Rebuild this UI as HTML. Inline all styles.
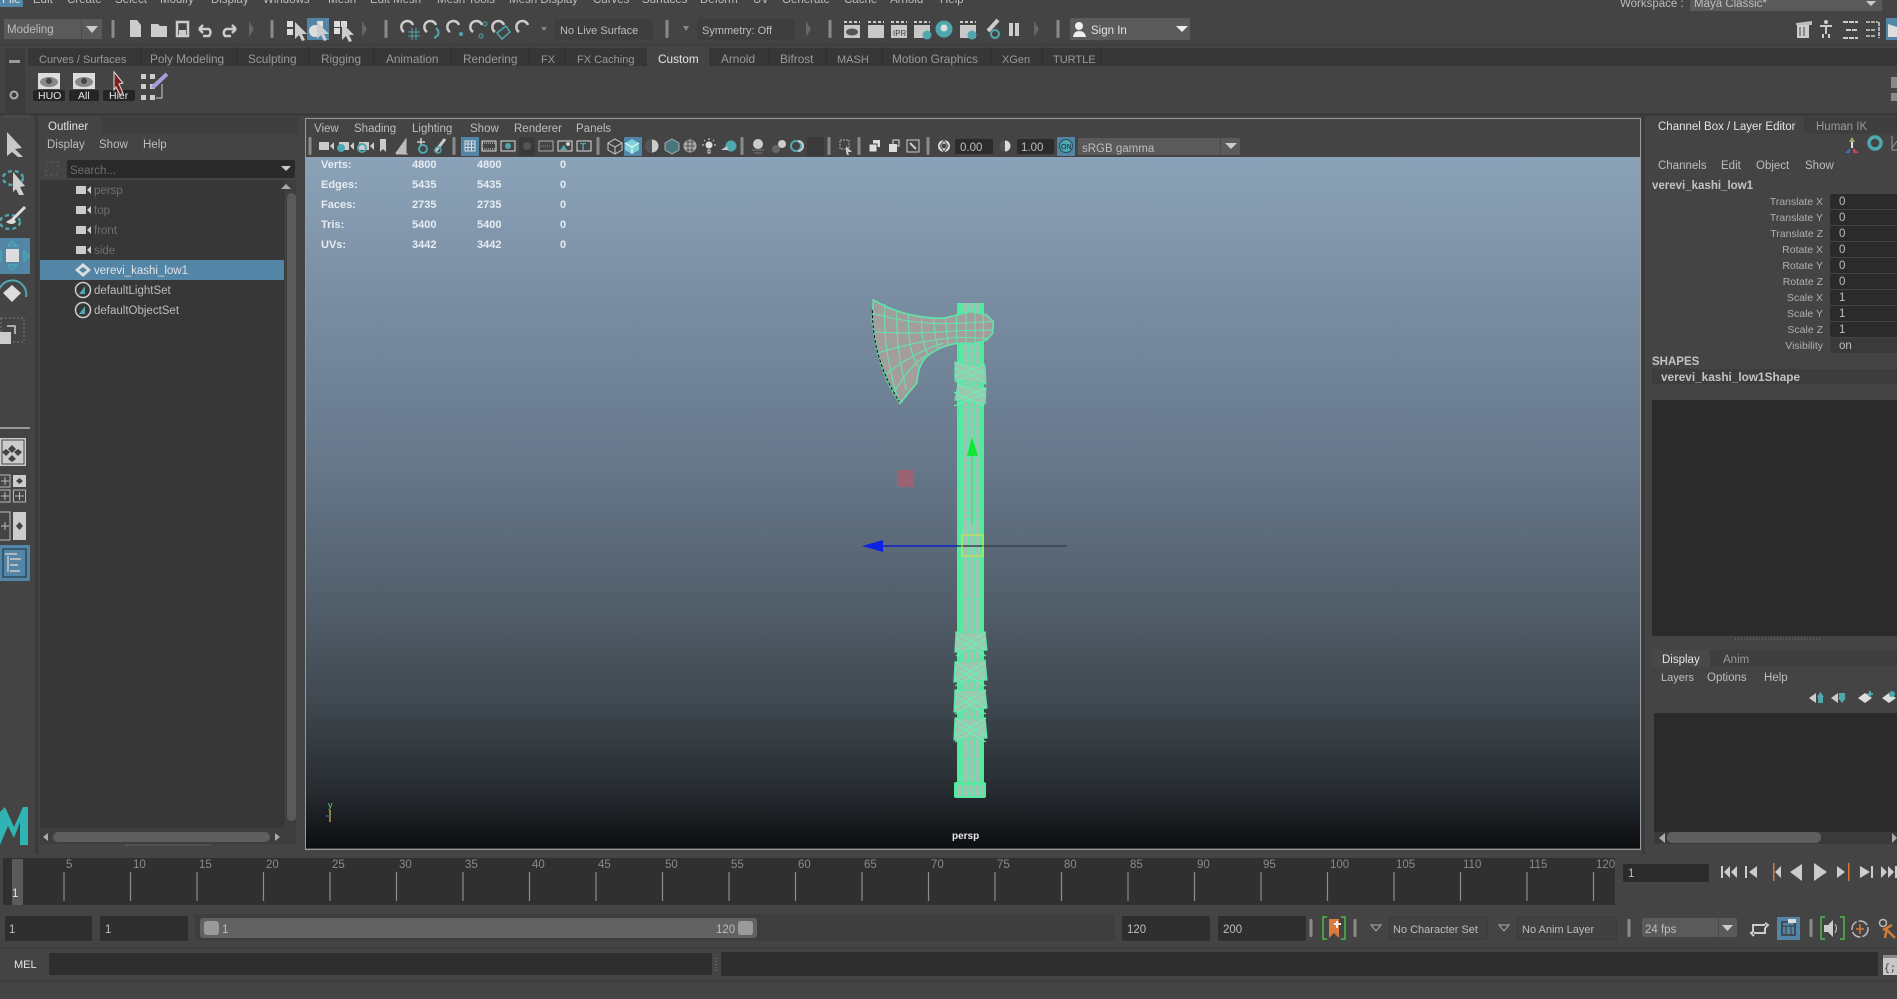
<!DOCTYPE html>
<html><head><meta charset="utf-8"><title>Maya</title>
<style>
html,body{margin:0;padding:0;width:1897px;height:999px;overflow:hidden;background:#444;font-family:"Liberation Sans",sans-serif}
.b{position:absolute}
.t{position:absolute;white-space:nowrap;font-size:11.5px;line-height:16px;height:16px;color:#bdbdbd;margin-top:1px}
.d{color:#9a9a9a}
.h{font-size:11.8px;margin-top:0}
.n{font-size:11px}
.o{color:#6f6f6f}
.w{color:#e4e4e4}
.m{margin-top:0}
.s{font-size:11px;font-weight:bold;color:#e6ecf2;line-height:14px;height:14px;margin-top:0}
.bd{font-weight:bold;font-size:11.5px;color:#c4c4c4;margin-top:0}
.r{position:absolute;left:1640px;width:183px;text-align:right;white-space:nowrap;font-size:10.5px;line-height:16px;color:#b0b0b0;margin-top:1px}
.f{position:absolute;left:1830px;width:67px;height:15px;background:#2b2b2b}
.v{position:absolute;left:1839px;font-size:11.5px;line-height:16px;color:#bdbdbd;margin-top:1px}
svg{position:absolute;left:0;top:0}
</style></head><body>

<div class="b" style="left:0;top:0;width:23px;height:7px;background:#5285a6"></div>
<div class="t w m" style="left:2px;top:-8px">File</div>
<div class="t m" style="left:33px;top:-8px">Edit</div>
<div class="t m" style="left:67px;top:-8px">Create</div>
<div class="t m" style="left:115px;top:-8px">Select</div>
<div class="t m" style="left:160px;top:-8px">Modify</div>
<div class="t m" style="left:211px;top:-8px">Display</div>
<div class="t m" style="left:263px;top:-8px">Windows</div>
<div class="t m" style="left:328px;top:-8px">Mesh</div>
<div class="t m" style="left:370px;top:-8px">Edit Mesh</div>
<div class="t m" style="left:437px;top:-8px">Mesh Tools</div>
<div class="t m" style="left:509px;top:-8px">Mesh Display</div>
<div class="t m" style="left:593px;top:-8px">Curves</div>
<div class="t m" style="left:642px;top:-8px">Surfaces</div>
<div class="t m" style="left:700px;top:-8px">Deform</div>
<div class="t m" style="left:753px;top:-8px">UV</div>
<div class="t m" style="left:782px;top:-8px">Generate</div>
<div class="t m" style="left:844px;top:-8px">Cache</div>
<div class="t m" style="left:890px;top:-8px">Arnold</div>
<div class="t m" style="left:940px;top:-8px">Help</div>
<div class="t m" style="left:1620px;top:-4px">Workspace :</div>
<div class="b" style="left:1690px;top:0;width:192px;height:11px;background:#5a5a5a"></div>
<div class="t m" style="left:1694px;top:-4px">Maya Classic*</div>

<div class="b" style="left:4px;top:19px;width:98px;height:20px;background:#5a5a5a"></div>
<div class="b" style="left:81px;top:19px;width:1px;height:20px;background:#4a4a4a"></div>
<div class="t" style="left:7px;top:21px">Modeling</div>
<div class="b" style="left:554px;top:19px;width:99px;height:21px;background:#3e3e3e;border-radius:2px"></div>
<div class="t n" style="left:560px;top:22px">No Live Surface</div>
<div class="b" style="left:697px;top:19px;width:98px;height:21px;background:#3e3e3e;border-radius:2px"></div>
<div class="t n" style="left:702px;top:22px">Symmetry: Off</div>
<div class="b" style="left:1070px;top:18px;width:120px;height:22px;background:#5b5b5b"></div>
<div class="t w" style="left:1091px;top:22px">Sign In</div>
<div class="b" style="left:307px;top:18px;width:22px;height:22px;background:#5285a6"></div>
<div class="b" style="left:1886px;top:18px;width:11px;height:22px;background:#5285a6"></div>

<div class="b" style="left:0;top:43px;width:1897px;height:3px;background:#3f3f3f"></div>
<div class="b" style="left:28px;top:48px;width:1869px;height:18px;background:#373737"></div>
<div class="b" style="left:5px;top:48px;width:20px;height:65px;background:#3c3c3c"></div>
<div class="b" style="left:646px;top:47px;width:64px;height:19px;background:#444"></div>
<div class="t d n" style="left:39px;top:51px">Curves / Surfaces</div>
<div class="t d h" style="left:150px;top:51px">Poly Modeling</div>
<div class="t d h" style="left:248px;top:51px">Sculpting</div>
<div class="t d h" style="left:321px;top:51px">Rigging</div>
<div class="t d h" style="left:386px;top:51px">Animation</div>
<div class="t d h" style="left:463px;top:51px">Rendering</div>
<div class="t d n" style="left:541px;top:51px">FX</div>
<div class="t d n" style="left:577px;top:51px">FX Caching</div>
<div class="t w h" style="left:658px;top:51px">Custom</div>
<div class="t d h" style="left:721px;top:51px">Arnold</div>
<div class="t d h" style="left:780px;top:51px">Bifrost</div>
<div class="t d n" style="left:837px;top:51px">MASH</div>
<div class="t d h" style="left:892px;top:51px">Motion Graphics</div>
<div class="t d n" style="left:1002px;top:51px">XGen</div>
<div class="t d n" style="left:1053px;top:51px">TURTLE</div>

<div class="b" style="left:33px;top:90px;width:32px;height:11px;background:#252525;border-radius:2px"></div>
<div class="b" style="left:69px;top:90px;width:30px;height:11px;background:#252525;border-radius:2px"></div>
<div class="b" style="left:103px;top:90px;width:32px;height:11px;background:#252525;border-radius:2px"></div>
<div class="t w m" style="left:38px;top:88px;font-size:10.500px">HUO</div>
<div class="t w m" style="left:78px;top:88px;font-size:10.500px">All</div>
<div class="t w m" style="left:109px;top:88px;font-size:10.500px">Hier</div>

<div class="b" style="left:0;top:113px;width:1897px;height:3px;background:#3a3a3a"></div>

<div class="b" style="left:35px;top:116px;width:3px;height:738px;background:#3a3a3a"></div>
<div class="b" style="left:38px;top:117px;width:64px;height:17px;background:#444"></div>
<div class="b" style="left:102px;top:117px;width:196px;height:17px;background:#3e3e3e"></div>
<div class="t w" style="left:48px;top:118px">Outliner</div>
<div class="t" style="left:47px;top:136px">Display</div>
<div class="t" style="left:99px;top:136px">Show</div>
<div class="t" style="left:143px;top:136px">Help</div>
<div class="b" style="left:67px;top:160px;width:228px;height:18px;background:#2a2a2a;border-radius:2px"></div>
<div class="t o" style="left:70px;top:162px">Search...</div>
<div class="b" style="left:40px;top:180px;width:245px;height:648px;background:#373737"></div>
<div class="b" style="left:40px;top:828px;width:256px;height:16px;background:#3e3e3e"></div>
<div class="b" style="left:286px;top:180px;width:10px;height:648px;background:#3e3e3e"></div>
<div class="b" style="left:287px;top:193px;width:9px;height:628px;background:#5a5a5a;border-radius:5px"></div>
<div class="b" style="left:53px;top:832px;width:217px;height:10px;background:#5e5e5e;border-radius:5px"></div>
<div class="b" style="left:40px;top:260px;width:244px;height:20px;background:#5285a6"></div>
<div class="t o" style="left:94px;top:182px">persp</div>
<div class="t o" style="left:94px;top:202px">top</div>
<div class="t o" style="left:94px;top:222px">front</div>
<div class="t o" style="left:94px;top:242px">side</div>
<div class="t w" style="left:94px;top:262px">verevi_kashi_low1</div>
<div class="t" style="left:94px;top:282px">defaultLightSet</div>
<div class="t" style="left:94px;top:302px">defaultObjectSet</div>

<div class="b" style="left:305px;top:118px;width:1334px;height:730px;border:1px solid #9a9a9a;background:#444"></div>
<div class="b" style="left:306px;top:157px;width:1334px;height:691px;background:linear-gradient(180deg,#8ba2b8 0%,#7a8ea3 20%,#66778a 45%,#55626f 62%,#414a52 78%,#262b30 92%,#0c0e10 100%)"></div>
<div class="t" style="left:314px;top:120px">View</div>
<div class="t" style="left:354px;top:120px">Shading</div>
<div class="t" style="left:412px;top:120px">Lighting</div>
<div class="t" style="left:470px;top:120px">Show</div>
<div class="t" style="left:514px;top:120px">Renderer</div>
<div class="t" style="left:576px;top:120px">Panels</div>
<div class="b" style="left:461px;top:137px;width:18px;height:19px;background:#5285a6"></div>
<div class="b" style="left:624px;top:137px;width:18px;height:19px;background:#5285a6"></div>
<div class="b" style="left:519px;top:137px;width:16px;height:19px;background:#3a3a3a"></div>
<div class="b" style="left:807px;top:137px;width:17px;height:19px;background:#3a3a3a"></div>
<div class="b" style="left:955px;top:139px;width:38px;height:15px;background:#2b2b2b;border-radius:2px"></div>
<div class="b" style="left:1017px;top:139px;width:37px;height:15px;background:#2b2b2b;border-radius:2px"></div>
<div class="t" style="left:960px;top:139px">0.00</div>
<div class="t" style="left:1021px;top:139px">1.00</div>
<div class="b" style="left:1057px;top:137px;width:18px;height:19px;background:#5285a6"></div>
<div class="b" style="left:1078px;top:138px;width:162px;height:17px;background:#5a5a5a"></div>
<div class="b" style="left:1220px;top:138px;width:1px;height:17px;background:#4a4a4a"></div>
<div class="t" style="left:1082px;top:140px">sRGB gamma</div>

<div class="t s" style="left:321px;top:158px">Verts:</div><div class="t s" style="left:412px;top:158px">4800</div><div class="t s" style="left:477px;top:158px">4800</div><div class="t s" style="left:560px;top:158px">0</div>
<div class="t s" style="left:321px;top:178px">Edges:</div><div class="t s" style="left:412px;top:178px">5435</div><div class="t s" style="left:477px;top:178px">5435</div><div class="t s" style="left:560px;top:178px">0</div>
<div class="t s" style="left:321px;top:198px">Faces:</div><div class="t s" style="left:412px;top:198px">2735</div><div class="t s" style="left:477px;top:198px">2735</div><div class="t s" style="left:560px;top:198px">0</div>
<div class="t s" style="left:321px;top:218px">Tris:</div><div class="t s" style="left:412px;top:218px">5400</div><div class="t s" style="left:477px;top:218px">5400</div><div class="t s" style="left:560px;top:218px">0</div>
<div class="t s" style="left:321px;top:238px">UVs:</div><div class="t s" style="left:412px;top:238px">3442</div><div class="t s" style="left:477px;top:238px">3442</div><div class="t s" style="left:560px;top:238px">0</div>
<div class="t m" style="left:952px;top:829px;font-size:10px;font-weight:bold;color:#e8e8e8">persp</div>

<div class="b" style="left:1642px;top:116px;width:3px;height:738px;background:#3a3a3a"></div>
<div class="b" style="left:1648px;top:117px;width:156px;height:17px;background:#444"></div>
<div class="b" style="left:1804px;top:117px;width:93px;height:17px;background:#3e3e3e"></div>
<div class="t w" style="left:1658px;top:118px">Channel Box / Layer Editor</div>
<div class="t d" style="left:1816px;top:118px">Human IK</div>
<div class="t" style="left:1658px;top:157px">Channels</div>
<div class="t" style="left:1721px;top:157px">Edit</div>
<div class="t" style="left:1756px;top:157px">Object</div>
<div class="t" style="left:1805px;top:157px">Show</div>
<div class="t bd" style="left:1652px;top:178px">verevi_kashi_low1</div>
<div class="r" style="top:193px">Translate X</div><div class="f" style="top:194px"></div><div class="v" style="top:193px">0</div>
<div class="r" style="top:209px">Translate Y</div><div class="f" style="top:210px"></div><div class="v" style="top:209px">0</div>
<div class="r" style="top:225px">Translate Z</div><div class="f" style="top:226px"></div><div class="v" style="top:225px">0</div>
<div class="r" style="top:241px">Rotate X</div><div class="f" style="top:242px"></div><div class="v" style="top:241px">0</div>
<div class="r" style="top:257px">Rotate Y</div><div class="f" style="top:258px"></div><div class="v" style="top:257px">0</div>
<div class="r" style="top:273px">Rotate Z</div><div class="f" style="top:274px"></div><div class="v" style="top:273px">0</div>
<div class="r" style="top:289px">Scale X</div><div class="f" style="top:290px"></div><div class="v" style="top:289px">1</div>
<div class="r" style="top:305px">Scale Y</div><div class="f" style="top:306px"></div><div class="v" style="top:305px">1</div>
<div class="r" style="top:321px">Scale Z</div><div class="f" style="top:322px"></div><div class="v" style="top:321px">1</div>
<div class="r" style="top:337px">Visibility</div><div class="f" style="top:338px;background:#3a3a3a"></div><div class="v" style="top:337px">on</div>
<div class="t bd" style="left:1652px;top:354px">SHAPES</div>
<div class="b" style="left:1652px;top:369px;width:245px;height:15px;background:#3d3d3d"></div>
<div class="t bd" style="left:1661px;top:369px;font-size:11.800px">verevi_kashi_low1Shape</div>
<div class="b" style="left:1652px;top:400px;width:245px;height:236px;background:#2b2b2b"></div>
<div class="b" style="left:1652px;top:650px;width:245px;height:16px;background:#3e3e3e"></div>
<div class="b" style="left:1652px;top:650px;width:58px;height:17px;background:#484848"></div>
<div class="t w" style="left:1662px;top:651px">Display</div>
<div class="t d" style="left:1723px;top:651px">Anim</div>
<div class="t" style="left:1661px;top:669px;font-size:11px">Layers</div>
<div class="t" style="left:1707px;top:669px">Options</div>
<div class="t" style="left:1764px;top:669px">Help</div>
<div class="b" style="left:1654px;top:713px;width:243px;height:122px;background:#2b2b2b"></div>
<div class="b" style="left:1654px;top:832px;width:243px;height:12px;background:#3a3a3a"></div>
<div class="b" style="left:1667px;top:832px;width:154px;height:11px;background:#5e5e5e;border-radius:5px"></div>

<div class="b" style="left:3px;top:858px;width:1612px;height:47px;background:#303030"></div>
<div class="b" style="left:12px;top:859px;width:11px;height:46px;background:#5a5a5a"></div>
<div class="t w" style="left:12px;top:885px">1</div>
<div class="b" style="left:1623px;top:864px;width:86px;height:18px;background:#2b2b2b;border-radius:2px"></div>
<div class="t" style="left:1628px;top:865px">1</div>

<div class="b" style="left:5px;top:916px;width:87px;height:25px;background:#2e2e2e;border-radius:2px"></div>
<div class="b" style="left:100px;top:916px;width:88px;height:25px;background:#2e2e2e;border-radius:2px"></div>
<div class="t" style="left:9px;top:921px">1</div>
<div class="t" style="left:105px;top:921px">1</div>
<div class="b" style="left:195px;top:914px;width:920px;height:27px;background:#3e3e3e"></div>
<div class="b" style="left:200px;top:918px;width:557px;height:20px;background:#626262;border-radius:3px"></div>
<div class="b" style="left:204px;top:921px;width:15px;height:14px;background:#9a9a9a;border-radius:3px"></div>
<div class="b" style="left:738px;top:921px;width:15px;height:14px;background:#9a9a9a;border-radius:3px"></div>
<div class="t" style="left:222px;top:921px">1</div>
<div class="t" style="left:716px;top:921px">120</div>
<div class="b" style="left:1122px;top:916px;width:88px;height:25px;background:#2e2e2e;border-radius:2px"></div>
<div class="b" style="left:1218px;top:916px;width:88px;height:25px;background:#2e2e2e;border-radius:2px"></div>
<div class="t" style="left:1127px;top:921px">120</div>
<div class="t" style="left:1223px;top:921px">200</div>
<div class="b" style="left:1389px;top:917px;width:99px;height:23px;background:#414141;border:1px solid #3c3c3c;box-sizing:border-box"></div>
<div class="t n" style="left:1393px;top:921px">No Character Set</div>
<div class="b" style="left:1517px;top:917px;width:100px;height:23px;background:#414141;border:1px solid #3c3c3c;box-sizing:border-box"></div>
<div class="t n" style="left:1522px;top:921px">No Anim Layer</div>
<div class="b" style="left:1642px;top:918px;width:95px;height:19px;background:#5a5a5a;border-radius:2px"></div>
<div class="b" style="left:1718px;top:918px;width:1px;height:19px;background:#4a4a4a"></div>
<div class="t" style="left:1645px;top:921px">24 fps</div>
<div class="b" style="left:1777px;top:917px;width:23px;height:23px;background:#5285a6"></div>

<div class="b" style="left:0;top:947px;width:1897px;height:2px;background:#3e3e3e"></div>
<div class="t w m" style="left:14px;top:957px;font-size:11px">MEL</div>
<div class="b" style="left:49px;top:953px;width:663px;height:22px;background:#2e2e2e;border-radius:2px"></div>
<div class="b" style="left:721px;top:952px;width:1157px;height:24px;background:#2e2e2e"></div>
<div class="b" style="left:0;top:980px;width:1897px;height:2px;background:#3e3e3e"></div>

<svg width="1897" height="999" viewBox="0 0 1897 999">
<defs>
<pattern id="hp" width="3" height="7" patternUnits="userSpaceOnUse" x="962" y="303"><rect width="3" height="7" fill="#9cc4b0"/><rect width="1" height="7" fill="#5ce6aa"/><rect y="6" width="3" height="1" fill="#68e0aa"/></pattern>
<pattern id="hv" width="3" height="40" patternUnits="userSpaceOnUse" x="962" y="520"><rect width="3" height="40" fill="#a2c4b2"/><rect width="1" height="40" fill="#5ce6aa"/><rect y="39" width="3" height="1" fill="#68e0aa"/></pattern>
<g id="sep"><rect x="-1.500" y="-9" width="3" height="18" fill="#8a8a8a" rx="1"/></g>
<path id="tri" d="M0 -8L5 0L0 8Z" fill="#666"/>
<g id="cam"><rect x="-7" y="-4" width="10" height="8" fill="#ccc"/><path d="M4 0L8 -4V4Z" fill="#ccc"/></g>
<g id="mag"><path d="M-4 4A6 6 0 1 1 5 -3" fill="none" stroke="#ccc" stroke-width="2.500"/></g>
<g id="clap"><path d="M-8 -8H8" stroke="#ccc" stroke-width="2" stroke-dasharray="3 2"/><rect x="-8" y="-5" width="16" height="13" fill="#c8c8c8"/></g>
<g id="arrow"><path d="M-5 -9L7 3H2L5 9L2 10L-1 4L-5 8Z" fill="#ccc"/></g>
<g id="eye"><rect x="-11" y="-8" width="22" height="16" fill="#ddd"/><ellipse cy="1" rx="9" ry="5" fill="#888"/><circle cy="0" r="3" fill="#444"/></g>
</defs>

<path d="M86 26H98L92 33Z" fill="#ccc"/>
<use href="#sep" x="113" y="29"/>
<path d="M130 20H137L141 25V37H130Z" fill="#ccc"/>
<path d="M151 24H158L160 26H167V37H151Z" fill="#ccc"/>
<rect x="177" y="22" width="11" height="14" fill="none" stroke="#ccc" stroke-width="2.500"/><rect x="179" y="30" width="7" height="6" fill="#ccc"/>
<path d="M199 29H209Q212 32 209 36H203M199 29L203 25M199 29L203 33" fill="none" stroke="#ccc" stroke-width="2.400"/>
<path d="M236 29H226Q222 32 225 36H231M236 29L232 25M236 29L232 33" fill="none" stroke="#ccc" stroke-width="2.400"/>
<use href="#tri" x="249" y="29"/>
<use href="#sep" x="272" y="29"/>
<rect x="287" y="21" width="6" height="6" fill="#ddd"/><rect x="287" y="29" width="6" height="6" fill="#ddd"/><use href="#arrow" x="300" y="31"/>
<circle cx="315" cy="31" r="6" fill="#ddd"/><rect x="317" y="21" width="6" height="6" fill="#ddd"/><use href="#arrow" x="322" y="31"/>
<rect x="334" y="21" width="6" height="6" fill="#ddd"/><rect x="334" y="28" width="6" height="6" fill="#ddd"/><rect x="341" y="21" width="6" height="6" fill="#ddd"/><use href="#arrow" x="347" y="32"/>
<use href="#tri" x="362" y="29"/>
<use href="#sep" x="386" y="29"/>
<use href="#mag" x="408" y="28"/><path d="M408 32H420M408 36H420M412 28V40M416 28V40" stroke="#4fa7b0" stroke-width="1"/>
<use href="#mag" x="431" y="28"/><path d="M436 28Q442 34 434 38" fill="none" stroke="#4fa7b0" stroke-width="2"/>
<use href="#mag" x="454" y="28"/><circle cx="461" cy="34" r="2" fill="#4fa7b0"/>
<use href="#mag" x="477" y="28"/><circle cx="485" cy="24" r="2" fill="none" stroke="#4fa7b0"/><circle cx="481" cy="36" r="2" fill="none" stroke="#4fa7b0"/>
<use href="#mag" x="499" y="28"/><path d="M497 33L506 26L510 32L502 39Z" fill="none" stroke="#4fa7b0" stroke-width="1.500"/>
<use href="#mag" x="523" y="28"/>
<path d="M541 27H547L544 31Z" fill="#888"/>
<use href="#sep" x="667" y="29"/>
<path d="M683 26H689L686 31Z" fill="#888"/>
<use href="#tri" x="806" y="29"/>
<use href="#sep" x="830" y="29"/>
<use href="#clap" x="852" y="30"/><ellipse cx="852" cy="32" rx="6" ry="3.500" fill="#555"/>
<use href="#clap" x="876" y="30"/>
<use href="#clap" x="899" y="30"/><text x="893" y="36" font-size="8" font-family="Liberation Sans" fill="#444">IPR</text>
<use href="#clap" x="922" y="30"/><circle cx="927" cy="35" r="4.500" fill="#4fa7b0"/>
<circle cx="944" cy="29" r="8.500" fill="#4fa7b0"/><circle cx="944" cy="28" r="3.500" fill="#ddd"/>
<use href="#clap" x="968" y="30"/><circle cx="972" cy="35" r="4.500" fill="#4fa7b0"/>
<path d="M988 31L998 20" stroke="#ccc" stroke-width="4"/><circle cx="995" cy="34" r="4" fill="none" stroke="#4fa7b0" stroke-width="2"/>
<rect x="1009" y="23" width="4" height="13" fill="#ccc"/><rect x="1015" y="23" width="4" height="13" fill="#ccc"/>
<use href="#tri" x="1034" y="29"/>
<use href="#sep" x="1058" y="29"/>
<circle cx="1079" cy="26" r="4" fill="#eee"/><path d="M1073 37Q1074 31 1079 31Q1085 31 1086 37Z" fill="#eee"/>
<path d="M1176 26H1188L1182 32Z" fill="#eee"/>
<path d="M1866 1H1876L1871 6Z" fill="#ccc"/>
<rect x="1797" y="24" width="12" height="14" fill="#ccc"/><path d="M1796 23L1812 21V25H1796Z" fill="#bbb"/>
<path d="M1800 27V36M1804 27V36" stroke="#444"/>
<circle cx="1826" cy="22" r="2" fill="#ccc"/><path d="M1820 26H1832M1826 26V34M1823 34V38M1829 34V38" stroke="#ccc" stroke-width="2"/>
<path d="M1843 22H1858M1843 38H1858M1846 30H1858" stroke="#ccc" stroke-width="2" stroke-dasharray="5 1"/>
<path d="M1866 22H1878M1866 30H1875M1866 36H1875M1879 22V38" stroke="#ccc" stroke-width="1.600" stroke-dasharray="4 1"/>
<path d="M1888 24L1897 27V37H1888Z" fill="#ddd"/>
<path d="M1891 77H1897V88H1891ZM1891 93H1897V101H1891Z" fill="#8a8a8a"/>

<rect x="9" y="60" width="11" height="3" fill="#9a9a9a"/>
<circle cx="14" cy="95" r="3.500" fill="none" stroke="#aaa" stroke-width="2"/>
<use href="#eye" x="49" y="81"/><use href="#eye" x="84" y="81"/>
<path d="M114 72L123 83L119 84L123 93L120 95L116 87L114 90Z" fill="#7c2020" stroke="#ddd"/>
<g fill="#ccc"><rect x="141" y="74" width="5" height="5"/><rect x="150" y="74" width="5" height="5"/><rect x="141" y="84" width="5" height="5"/><rect x="150" y="84" width="5" height="5"/><rect x="141" y="95" width="5" height="5"/><rect x="150" y="95" width="5" height="5"/></g>
<path d="M152 88L167 74" stroke="#a59ed8" stroke-width="4"/>
<path d="M156 98H162V84" fill="none" stroke="#ccc"/>
<path d="M3 116H30" stroke="#666" stroke-dasharray="1 1" stroke-width="1"/>
<path d="M141 47V66M237 47V66M309 47V66M374 47V66M451 47V66M529 47V66M565 47V66M646 47V66M710 47V66M769 47V66M826 47V66M882 47V66M991 47V66M1042 47V66M1101 47V66" stroke="#2e2e2e"/>

<path d="M7 132L22 148L15 149L23 157L18 157L12 152L7 156Z" fill="#c8c8c8"/>
<ellipse cx="13" cy="178" rx="10" ry="7" fill="none" stroke="#4fa7b0" stroke-width="2.400" stroke-dasharray="4 3"/>
<path d="M13 172L25 186L20 187L24 195H19L16 189L13 192Z" fill="#d0d0d0"/>
<ellipse cx="10" cy="222" rx="10" ry="7" fill="none" stroke="#4fa7b0" stroke-width="2.400" stroke-dasharray="4 3"/>
<path d="M10 222L25 207" stroke="#ddd" stroke-width="3"/><path d="M6 222Q14 216 16 222Q12 226 6 222Z" fill="#ddd"/>
<rect x="0" y="238" width="30" height="36" fill="#5285a6"/>
<rect x="6" y="249" width="13" height="13" fill="#ddd"/>
<path d="M12 241L17 246H8ZM12 270L17 265H8ZM24 251L29 256L24 261ZM1 251L-4 256L1 261Z" fill="none" stroke="#48a8b0" stroke-width="1.500"/>
<path d="M12 285L21 293L12 302L3 293Z" fill="#ddd"/>
<path d="M-1 299A14 14 0 1 1 26 297" fill="none" stroke="#4fa7b0" stroke-width="2"/>
<rect x="1" y="318" width="23" height="24" fill="none" stroke="#777" stroke-dasharray="2 2"/><rect x="0" y="332" width="11" height="12" fill="#ccc"/><path d="M7 326H15V334" fill="none" stroke="#ccc" stroke-width="1.500"/>
<rect x="0" y="427" width="30" height="2" fill="#999"/>
<rect x="0" y="438" width="26" height="28" fill="#ccc"/><rect x="2" y="440" width="22" height="24" fill="none" stroke="#444"/>
<path d="M12 445L16 449L12 453L8 449ZM6 449L10 452L6 456L2 452ZM18 449L22 452L18 456L14 452ZM12 455L16 459L12 462L8 459Z" fill="#444"/>
<g fill="none" stroke="#bbb"><rect x="-1" y="475" width="11" height="12"/><rect x="-1" y="490" width="11" height="12"/><rect x="13.500" y="490" width="12" height="12"/><path d="M1 481H9M5 477V485M1 496H9M5 492V500M15 496H24M19.500 492V500"/></g>
<rect x="13" y="475" width="13" height="12" fill="#ccc"/><path d="M19.500 478L23 481L19.500 484L16 481Z" fill="#444"/>
<rect x="-1" y="512" width="11" height="28" fill="none" stroke="#bbb"/><path d="M1 526H9M5 522V530" stroke="#bbb"/>
<rect x="13" y="512" width="13" height="28" fill="#ccc"/><path d="M19.500 522L23 526L19.500 530L16 526Z" fill="#444"/>
<rect x="0" y="545" width="30" height="36" fill="#5285a6"/><rect x="3" y="549" width="23" height="28" fill="none" stroke="#2f4a5e" stroke-width="1.500"/>
<path d="M5 554H17M10 559H21M10 565H18M10 571H20M8 556V572" stroke="#ccc" stroke-width="1.400"/>
<path d="M0 812L5 807L14 827L23 807L28 807L28 845H20V822L14 838L8 826L0 845Z" fill="#2fb3b3"/>

<rect x="46" y="162" width="12" height="13" fill="none" stroke="#5a5a5a" stroke-dasharray="3 2"/>
<path d="M281 166H291L286 171Z" fill="#ccc"/>
<path d="M286 184L291 189H281Z" fill="#aaa"/>
<use href="#cam" x="83" y="190"/><use href="#cam" x="83" y="210"/><use href="#cam" x="83" y="230"/><use href="#cam" x="83" y="250"/>
<path d="M83 263L91 270L83 277L75 270Z" fill="#ddd"/><path d="M83 267L87 270L83 273L79 270Z" fill="#5285a6"/>
<circle cx="83" cy="290" r="7.500" fill="none" stroke="#ccc" stroke-width="1.500"/><path d="M79 294L85 286V294Z" fill="#4fa7b0"/>
<circle cx="83" cy="310" r="7.500" fill="none" stroke="#ccc" stroke-width="1.500"/><path d="M79 314L85 306V314Z" fill="#4fa7b0"/>
<path d="M43 837L48 833V841Z" fill="#aaa"/><path d="M275 833L280 837L275 841Z" fill="#aaa"/>
<path d="M125 845H210" stroke="#777" stroke-dasharray="1 1"/>

<g transform="translate(0 146)">
<use href="#sep" x="310" y="0"/>
<use href="#cam" x="326" y="0"/><use href="#cam" x="346" y="0"/><circle cx="341" cy="2" r="4" fill="#4fa7b0"/><use href="#cam" x="366" y="0"/><circle cx="362" cy="2" r="4" fill="none" stroke="#4fa7b0" stroke-width="2"/>
<path d="M380 -7H386V6L383 3L380 6Z" fill="#ccc"/>
<path d="M396 7L406 -7V7ZM396 8H408" fill="#bbb" stroke="#bbb"/>
<path d="M421 -8V0M417 -4H425" stroke="#ccc" stroke-width="1.500"/><circle cx="423" cy="3" r="4" fill="none" stroke="#4fa7b0" stroke-width="2"/>
<path d="M435 6L445 -7" stroke="#ccc" stroke-width="3"/><circle cx="438" cy="4" r="3" fill="none" stroke="#4fa7b0" stroke-width="1.500"/>
<use href="#sep" x="454" y="0"/>
<rect x="465" y="-5" width="10" height="10" fill="none" stroke="#ddd"/><path d="M468 -5V5M471.500 -5V5M465 -2H475M465 1.500H475" stroke="#ddd"/>
<rect x="482" y="-5" width="14" height="10" fill="none" stroke="#ddd"/><path d="M482 -3H496M482 3H496" stroke="#ddd" stroke-dasharray="1 1"/>
<rect x="501" y="-5" width="14" height="10" fill="none" stroke="#ddd"/><circle cx="508" cy="0" r="3" fill="#4fa7b0"/>
<circle cx="527" cy="0" r="4" fill="#555"/>
<rect x="539" y="-5" width="14" height="10" fill="none" stroke="#aaa"/><path d="M541 0H551" stroke="#4fa7b0" stroke-dasharray="1 1"/>
<rect x="558" y="-5" width="14" height="10" fill="none" stroke="#ddd"/><path d="M560 4L564 -1L567 4Z" fill="#4fa7b0"/><circle cx="568" cy="-2" r="2" fill="#ccc"/>
<rect x="577" y="-5" width="14" height="10" fill="none" stroke="#ddd"/><text x="580" y="4" font-size="10" font-weight="bold" font-family="Liberation Sans" fill="#4fa7b0">T</text>
<use href="#sep" x="598" y="0"/>
<path d="M615 -7L622 -3V4L615 8L608 4V-3ZM608 -3L615 1L622 -3M615 1V8" fill="none" stroke="#ccc"/>
<path d="M632 -7L639 -3V4L632 8L625 4V-3Z" fill="#7fd0d8"/><path d="M625 -3L632 1L639 -3M632 1V8" fill="none" stroke="#fff"/>
<circle cx="652" cy="0" r="6.500" fill="#ccc"/><path d="M652 -6.500A6.500 6.500 0 0 0 652 6.500Z" fill="#555"/>
<path d="M672 -7L679 -3V4L672 8L665 4V-3Z" fill="#49777c" stroke="#aaa"/>
<circle cx="690" cy="0" r="6.500" fill="#aaa"/><path d="M686 -4H694M685 0H695M686 4H694M688 -6V6M692 -6V6" stroke="#555"/>
<circle cx="709" cy="-1" r="3.500" fill="#ddd"/><path d="M709 -8V-6M702 -1H704M714 -1H716M704 -6L705 -5M713 -5L714 -6M708 4H710V7H708Z" stroke="#ddd"/>
<circle cx="731" cy="0" r="5.500" fill="#4fa7b0"/><path d="M721 4L727 0L728 4Z" fill="#ccc"/>
<use href="#sep" x="742" y="0"/>
<circle cx="758" cy="-2" r="5" fill="#ccc"/><path d="M752 4H764M754 7H762" stroke="#777"/>
<circle cx="782" cy="-2" r="4" fill="#ccc"/><circle cx="776" cy="3" r="4" fill="#666"/>
<circle cx="796" cy="0" r="5" fill="none" stroke="#4fa7b0" stroke-width="2"/><path d="M798 -5A5 5 0 0 1 798 5" fill="none" stroke="#ccc" stroke-width="2"/>
<use href="#sep" x="829" y="0"/>
<rect x="840" y="-6" width="9" height="9" fill="none" stroke="#aaa" stroke-dasharray="2 1"/><path d="M846 0L852 6L848 6L849 9L847 9L846 6Z" fill="#ccc"/>
<use href="#sep" x="859" y="0"/>
<rect x="873" y="-6" width="7" height="7" fill="#ddd"/><rect x="869" y="-2" width="8" height="8" fill="#ddd" stroke="#444"/>
<rect x="893" y="-6" width="6" height="6" fill="none" stroke="#ddd"/><rect x="889" y="-2" width="8" height="8" fill="#ddd"/>
<rect x="907" y="-6" width="12" height="12" fill="none" stroke="#ccc"/><path d="M910 -3L916 3" stroke="#ccc" stroke-width="2"/>
<use href="#sep" x="928" y="0"/>
<circle cx="944" cy="0" r="6" fill="#ddd"/><circle cx="944" cy="0" r="2.500" fill="#444"/><path d="M944 -6L948 0L944 6L940 0Z" fill="none" stroke="#444"/>
<circle cx="1005" cy="0" r="5.500" fill="#555"/><path d="M1005 -5.500A5.500 5.500 0 0 1 1005 5.500Z" fill="#ddd"/>
<circle cx="1066" cy="0" r="6.500" fill="#4fa7b0" stroke="#2a4a55"/><text x="1061" y="3" font-size="7" font-family="Liberation Sans" fill="#123">ON</text>
<path d="M1225 -3H1237L1231 3Z" fill="#ccc"/>
</g>

<path d="M330 810V822" stroke="#b8a040" stroke-width="1.500"/><path d="M326 816H330" stroke="#3a5aa0" stroke-width="1.500"/>
<text x="328" y="808" font-size="9" fill="#6fd070" font-family="Liberation Sans">y</text>

<rect x="957" y="303" width="27" height="482" fill="#52ea9f"/>
<rect x="961" y="303" width="19" height="217" fill="url(#hp)"/>
<rect x="961" y="520" width="19" height="262" fill="url(#hv)"/>
<rect x="954" y="782" width="32" height="16" rx="2" fill="#52ea9f"/><rect x="957" y="785" width="26" height="11" fill="url(#hv)"/>
<g fill="#9ac8b0" stroke="#57e8a4" stroke-width="1.200">
<path d="M955 362L985 366L986 384L955 380Z"/>
<path d="M958 384L986 388L985 404L955 400Z"/>
<path d="M956 632L985 632L987 650L955 652Z"/>
<path d="M955 662L985 660L987 680L954 682Z"/>
<path d="M955 690L985 690L987 708L954 712Z"/>
<path d="M955 718L985 718L987 738L954 740Z"/>
</g>
<g fill="none" stroke="#6cefb2" stroke-width="1.200">
<path d="M955 362L985 375M955 376L985 364M955 368L985 382M955 382L985 370M957 384L986 397M957 400L986 388M954 392L984 406M954 406L984 394"/>
<path d="M956 632L986 650M986 632L956 650M956 638L986 656M986 638L956 656"/>
<path d="M955 662L986 680M986 662L955 680M955 668L986 686M986 668L955 686"/>
<path d="M955 690L986 708M986 690L955 708M955 696L986 714M986 696L955 714"/>
<path d="M955 718L986 736M986 718L955 736M955 724L986 742M986 724L955 742"/>
</g>
<g transform="translate(840 280) scale(.33333)">
<path d="M100 60C160 95 230 115 310 115L350 105L395 95L440 105L460 125L458 160L440 180L400 190L350 190C320 195 290 205 260 230C240 250 235 270 230 310L180 370C140 310 110 240 97 120Z" fill="#a39d9d" stroke="#5fe3a8" stroke-width="5"/>
<g fill="none" stroke="#68e0aa" stroke-width="3.400">
<path d="M97 100C170 120 260 135 350 130L458 125M100 155C170 160 260 160 350 152L460 150M112 220C170 200 260 180 350 172L445 175M135 285C180 250 250 205 310 190M160 340C190 290 220 250 260 225"/>
<path d="M135 72C130 150 140 250 175 360M170 90C170 150 170 220 200 330M205 105C205 160 205 210 235 260M245 115C245 150 245 190 265 225M280 118C285 150 285 185 295 205M315 115C320 140 320 170 325 195M350 105V190M378 98V190M405 95V190M430 102V185"/>
</g>
<path d="M97 90C98 200 130 290 178 365" fill="none" stroke="#111" stroke-width="3" stroke-dasharray="10 5"/>
</g>
<rect x="897" y="470" width="17" height="17" fill="#a5606e" opacity=".85"/>
<path d="M972 456V525" stroke="#3be06a" stroke-width="1"/>
<path d="M972 437L978 456H967Z" fill="#12e833"/>
<path d="M880 546H958" stroke="#0c22c8" stroke-width="1.500"/>
<path d="M958 546H1067" stroke="#39424a" stroke-width="1.500"/>
<path d="M862 546L883 540V552Z" fill="#0c22e0"/>
<rect x="962" y="535" width="21" height="21" fill="none" stroke="#d2e83a" stroke-width="1"/>

<path d="M1852 137L1855 142H1849Z" fill="#a8a860"/><rect x="1851" y="142" width="2" height="6" fill="#ddd"/><path d="M1845 153L1850 148V153Z" fill="#4a6ac0"/><path d="M1853 148L1859 153H1853Z" fill="#c04848"/>
<circle cx="1875" cy="143" r="6" fill="none" stroke="#4fa7b0" stroke-width="3.500"/>
<path d="M1892 136V150H1897M1892 148L1897 141" fill="none" stroke="#999"/>
<path d="M1735 639H1820" stroke="#777" stroke-dasharray="1 2"/>
<g transform="translate(0 698)">
<path d="M1809 0L1816 -5V5Z" fill="#ccc"/><path d="M1818 -1H1823V5H1818ZM1820.500 -6L1824 -1H1817Z" fill="#4fa7b0"/>
<path d="M1831 0L1838 -5V5Z" fill="#ccc"/><path d="M1839 -5H1845V0H1839ZM1842 5L1846 0H1838Z" fill="#4fa7b0"/>
<path d="M1858 0L1865 -5L1872 0L1865 5Z" fill="#ddd"/><path d="M1870 -7V-1M1867 -4H1873" stroke="#4fa7b0" stroke-width="2"/>
<path d="M1882 0L1889 -5L1896 0L1889 5Z" fill="#ddd"/><circle cx="1892" cy="-4" r="3" fill="#4fa7b0"/>
</g>
<path d="M1665 833L1659 838L1665 843Z" fill="#aaa"/><path d="M1892 833L1897 838L1892 843Z" fill="#aaa"/>

<path d="M64 872V901M130.500 872V901M197 872V901M263.500 872V901M330 872V901M396.500 872V901M463 872V901M529.500 872V901M596 872V901M662.500 872V901M729 872V901M795.500 872V901M862 872V901M928.500 872V901M995 872V901M1061.500 872V901M1128 872V901M1194.500 872V901M1261 872V901M1327.500 872V901M1394 872V901M1460.500 872V901M1527 872V901M1593.500 872V901" stroke="#8c8c8c" stroke-width="1.200"/>
<g font-family="Liberation Sans" font-size="11.500" fill="#8a8a8a">
<text x="66" y="868">5</text><text x="133" y="868">10</text><text x="199" y="868">15</text><text x="266" y="868">20</text><text x="332" y="868">25</text><text x="399" y="868">30</text><text x="465" y="868">35</text><text x="532" y="868">40</text><text x="598" y="868">45</text><text x="665" y="868">50</text><text x="731" y="868">55</text><text x="798" y="868">60</text><text x="864" y="868">65</text><text x="931" y="868">70</text><text x="997" y="868">75</text><text x="1064" y="868">80</text><text x="1130" y="868">85</text><text x="1197" y="868">90</text><text x="1263" y="868">95</text><text x="1330" y="868">100</text><text x="1396" y="868">105</text><text x="1463" y="868">110</text><text x="1529" y="868">115</text><text x="1596" y="868">120</text>
</g>
<g fill="#ccc">
<rect x="1721" y="866" width="2" height="12"/><path d="M1730 866L1724 872L1730 878ZM1737 866L1731 872L1737 878Z"/>
<rect x="1745" y="866" width="2" height="12"/><path d="M1757 866L1749 872L1757 878Z"/>
<rect x="1773" y="863" width="1.500" height="18" fill="#d07a3a"/><path d="M1781 866L1775 872L1781 878Z"/>
<path d="M1802 864L1790 872L1802 881Z"/><path d="M1814 863L1827 872L1814 881Z"/>
<path d="M1837 866L1845 872L1837 878Z"/><rect x="1848" y="863" width="1.500" height="18" fill="#d07a3a"/>
<path d="M1860 866L1870 872L1860 878Z"/><rect x="1871" y="866" width="2" height="12"/>
<path d="M1881 866L1887 872L1881 878ZM1888 866L1894 872L1888 878Z"/><rect x="1895" y="866" width="2" height="12"/>
</g>
<use href="#sep" x="1311" y="928"/>
<path d="M1327 917H1323V939H1327M1341 917H1345V939H1341" fill="none" stroke="#4cc04c" stroke-width="1.400"/>
<path d="M1329 919H1339V938L1334 933L1329 938Z" fill="#dc7a3c"/>
<path d="M1337 921V928M1334 924H1341" stroke="#eee" stroke-width="2"/>
<use href="#sep" x="1355" y="928"/>
<path d="M1371 925H1381L1376 931Z" fill="none" stroke="#aaa"/>
<path d="M1499 925H1509L1504 931Z" fill="none" stroke="#aaa"/>
<use href="#sep" x="1629" y="928"/>
<path d="M1722 925H1733L1727.500 931Z" fill="#ccc"/>
<path d="M1753 932V925H1765M1765 923L1768 925L1765 928M1765 928V933H1754M1754 931L1751 933L1754 936" fill="none" stroke="#ccc" stroke-width="2"/>
<rect x="1782" y="922" width="13" height="13" fill="none" stroke="#3a3a3a" stroke-width="1.500"/><path d="M1782 926H1795M1786 926V935M1791 926V935" stroke="#3a3a3a"/><rect x="1788" y="919" width="8" height="4" fill="#ddd"/>
<use href="#sep" x="1811" y="928"/>
<path d="M1825 917H1821V939H1825M1840 917H1844V939H1840" fill="none" stroke="#4cc04c" stroke-width="1.400"/>
<path d="M1824 925H1828L1833 920V937L1828 932H1824Z" fill="#ccc"/><path d="M1835 924Q1838 928 1835 933" fill="none" stroke="#ccc"/>
<circle cx="1860" cy="929" r="8" fill="none" stroke="#bbb" stroke-width="1.500" stroke-dasharray="10 2"/><path d="M1860 924V934M1856 929H1864" stroke="#d07a3a" stroke-width="1.500"/>
<circle cx="1883" cy="923" r="3.500" fill="none" stroke="#bbb" stroke-width="1.500"/>
<path d="M1883 930L1892 925M1887 928L1885 938M1887 930L1895 938" stroke="#d07a3a" stroke-width="2.500"/>
<path d="M716 958V972" stroke="#888" stroke-dasharray="1 2"/>
<rect x="1883" y="955" width="14" height="20" fill="#c8c8c8"/><rect x="1883" y="955" width="14" height="3" fill="#888"/>
<text x="1884" y="971" font-size="10" font-family="Liberation Mono" fill="#333">{;}</text>
</svg>

</body></html>
